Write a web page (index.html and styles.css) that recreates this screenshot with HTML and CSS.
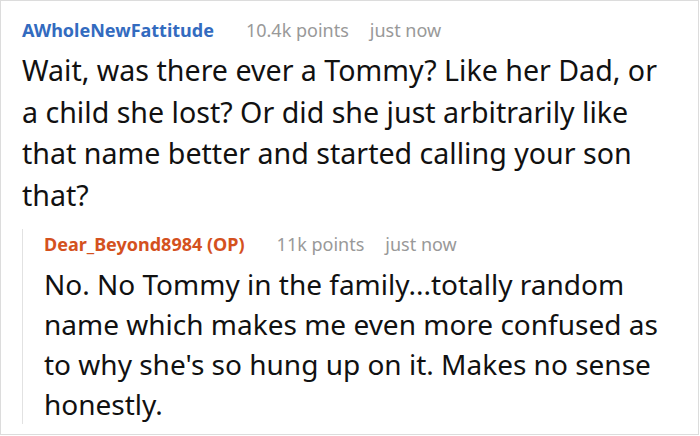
FILE: index.html
```html
<!DOCTYPE html>
<html>
<head>
<meta charset="utf-8">
<link rel="stylesheet" href="styles.css">
</head>
<body>
<div class="thread">
  <div class="comment">
    <div class="meta">
      <span class="author blue">AWholeNewFattitude</span>
      <span class="info">10.4k points</span>
      <span class="info">just now</span>
    </div>
    <p class="text top">Wait, was there ever a Tommy? Like her Dad, or a child she lost? Or did she just arbitrarily like that name better and started calling your son that?</p>
    <div class="reply">
      <div class="meta">
        <span class="author orange">Dear_Beyond8984 (OP)</span>
        <span class="info">11k points</span>
        <span class="info">just now</span>
      </div>
      <p class="text">No. No Tommy in the family...totally random name which makes me even more confused as to why she's so hung up on it. Makes no sense honestly.</p>
    </div>
  </div>
</div>
</body>
</html>
```
FILE: styles.css
```css
html, body {
  margin: 0;
  padding: 0;
  background: #fff;
}
.thread {
  width: 699px;
  height: 435px;
  box-sizing: border-box;
  border: 1px solid #dcdcdc;
  padding: 14px 20px 0 21px;
  font-family: "Noto Sans", "Open Sans", sans-serif;
  overflow: hidden;
}
.meta {
  display: flex;
  gap: 21px;
  font-size: 18px;
  line-height: 30px;
}
.author {
  font-weight: bold;
  margin-right: 11px;
}
.blue { color: #336bbf; }
.orange { color: #d4511e; }
.info { color: #999; }
.text {
  margin: 4px 0 0;
  font-size: 28px;
  line-height: 41px;
  color: #111;
}
.text.top {
  font-size: 28.6px;
  line-height: 41.5px;
}
.reply {
  margin-top: 26px;
  border-left: 1px solid #e2e2e2;
  padding-left: 21px;
}
.reply .meta {
  margin-top: -12px;
}
.reply .text {
  margin-top: 5px;
  line-height: 40px;
  margin-bottom: -8px;
}
```
